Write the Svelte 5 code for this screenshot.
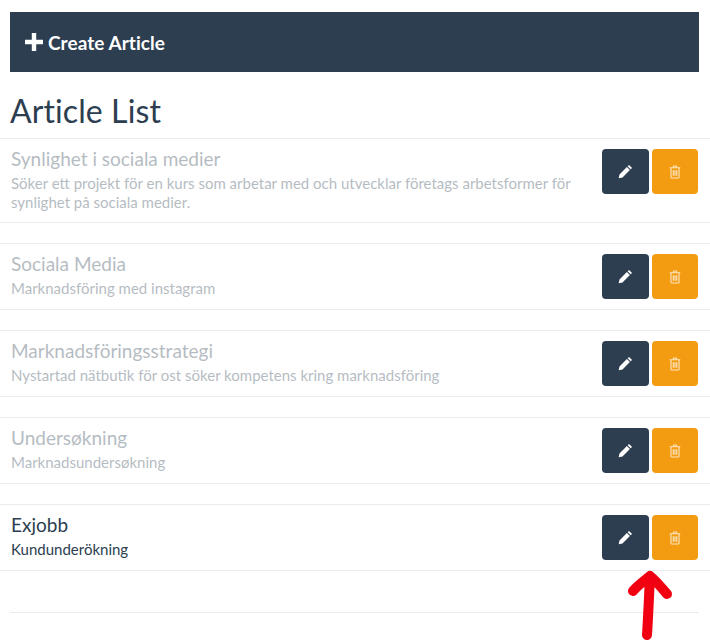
<script>
  const articles = [
    { title: 'Synlighet i sociala medier', text: 'Söker ett projekt för en kurs som arbetar med och utvecklar företags arbetsformer för synlighet på sociala medier.', faded: true },
    { title: 'Sociala Media', text: 'Marknadsföring med instagram', faded: true },
    { title: 'Marknadsföringsstrategi', text: 'Nystartad nätbutik för ost söker kompetens kring marknadsföring', faded: true },
    { title: 'Undersøkning', text: 'Marknadsundersøkning', faded: true },
    { title: 'Exjobb', text: 'Kundunderökning', faded: false }
  ];
</script>

<main class="page">
  <header class="bar">
    <svg class="plus" viewBox="0 0 18 18" aria-hidden="true"><path d="M6.800 0h4.400v6.800H18v4.400h-6.800V18H6.800v-6.800H0V6.800h6.800z" /></svg>
    <span>Create Article</span>
  </header>
  <h1>Article List</h1>
  <ul>
    {#each articles as a}
      <li>
        <div class="body" class:faded={a.faded}>
          <h2>{a.title}</h2>
          <p>{a.text}</p>
        </div>
        <div class="actions">
          <button class="edit" aria-label="Edit">
            <svg viewBox="0 0 14 14" width="15" height="15"><path d="M10.300.9 13.100 3.700 11.800 5 9 2.200zM8.300 2.900 11.100 5.700 4.200 12.600.6 13.400 1.400 9.800z" fill="#fff" /></svg>
          </button>
          <button class="del" aria-label="Delete">
            <svg viewBox="0 0 14 16" width="12" height="14"><path d="M4.800 2.600 5.600 1h2.800l.8 1.600M.8 3h12.400M2.300 3.400v10.300c0 .7.500 1.300 1.100 1.300h7.200c.6 0 1.100-.6 1.100-1.300V3.400M5 6v6.300M7 6v6.300M9 6v6.300" fill="none" stroke="#fff" stroke-opacity=".75" stroke-width="1.300" /></svg>
          </button>
        </div>
      </li>
    {/each}
  </ul>
  <div class="endrule"></div>
  <svg class="arrow" viewBox="625 565 50 77" aria-hidden="true"><path d="M647 635C648 620 649 597 650 576M633 591C638 585 644 581 650 576C656 581 662 588 667 594" fill="none" stroke="#f00010" stroke-width="10" stroke-linecap="round" stroke-linejoin="round" /></svg>
</main>

<style>
  :global(body) { margin: 0; background: #fff; }
  .page {
    position: relative;
    width: 710px;
    height: 642px;
    overflow: hidden;
    box-sizing: border-box;
    padding-top: 12px;
    font-family: Lato, "Open Sans", sans-serif;
    color: #2c3e50;
  }
  .bar {
    margin: 0 11px 0 10px;
    height: 60px;
    background: #2c3e50;
    color: #fff;
    display: flex;
    align-items: center;
    gap: 5px;
    padding-left: 15px;
    font-size: 19px;
    font-weight: 700;
    letter-spacing: 0.05px;
  }
  .plus { width: 18px; height: 18px; fill: #fff; }
  h1 {
    margin: 0;
    padding: 19px 0 0 10px;
    height: 47px;
    font-size: 32px;
    line-height: 40px;
    font-weight: 400;
    letter-spacing: 0.1px;
  }
  ul { list-style: none; margin: 0; padding: 0; }
  li {
    display: flex;
    justify-content: space-between;
    align-items: flex-start;
    box-sizing: border-box;
    min-height: 67px;
    margin-bottom: 20px;
    padding: 9px 12px 10px 11px;
    border-top: 1px solid #e9ecee;
    border-bottom: 1px solid #e9ecee;
  }
  .body { width: 580px; }
  .faded { opacity: 0.35; }
  h2 {
    margin: 0;
    font-size: 19px;
    line-height: 22px;
    font-weight: 400;
  }
  p {
    margin: 4px 0 0;
    font-size: 15px;
    line-height: 19px;
  }
  .actions { display: flex; gap: 3px; margin-top: 1px; }
  button {
    width: 47px;
    height: 45px;
    padding: 0;
    border: 0;
    border-radius: 4px;
    display: flex;
    align-items: center;
    justify-content: center;
  }
  .edit { background: #2c3e50; }
  .del { width: 46px; background: #f39c12; }
  .endrule {
    margin: 41px 11px 0 10px;
    border-top: 1px solid #e9ecee;
  }
  .arrow {
    position: absolute;
    left: 625px;
    top: 565px;
    width: 50px;
    height: 77px;
  }
</style>
